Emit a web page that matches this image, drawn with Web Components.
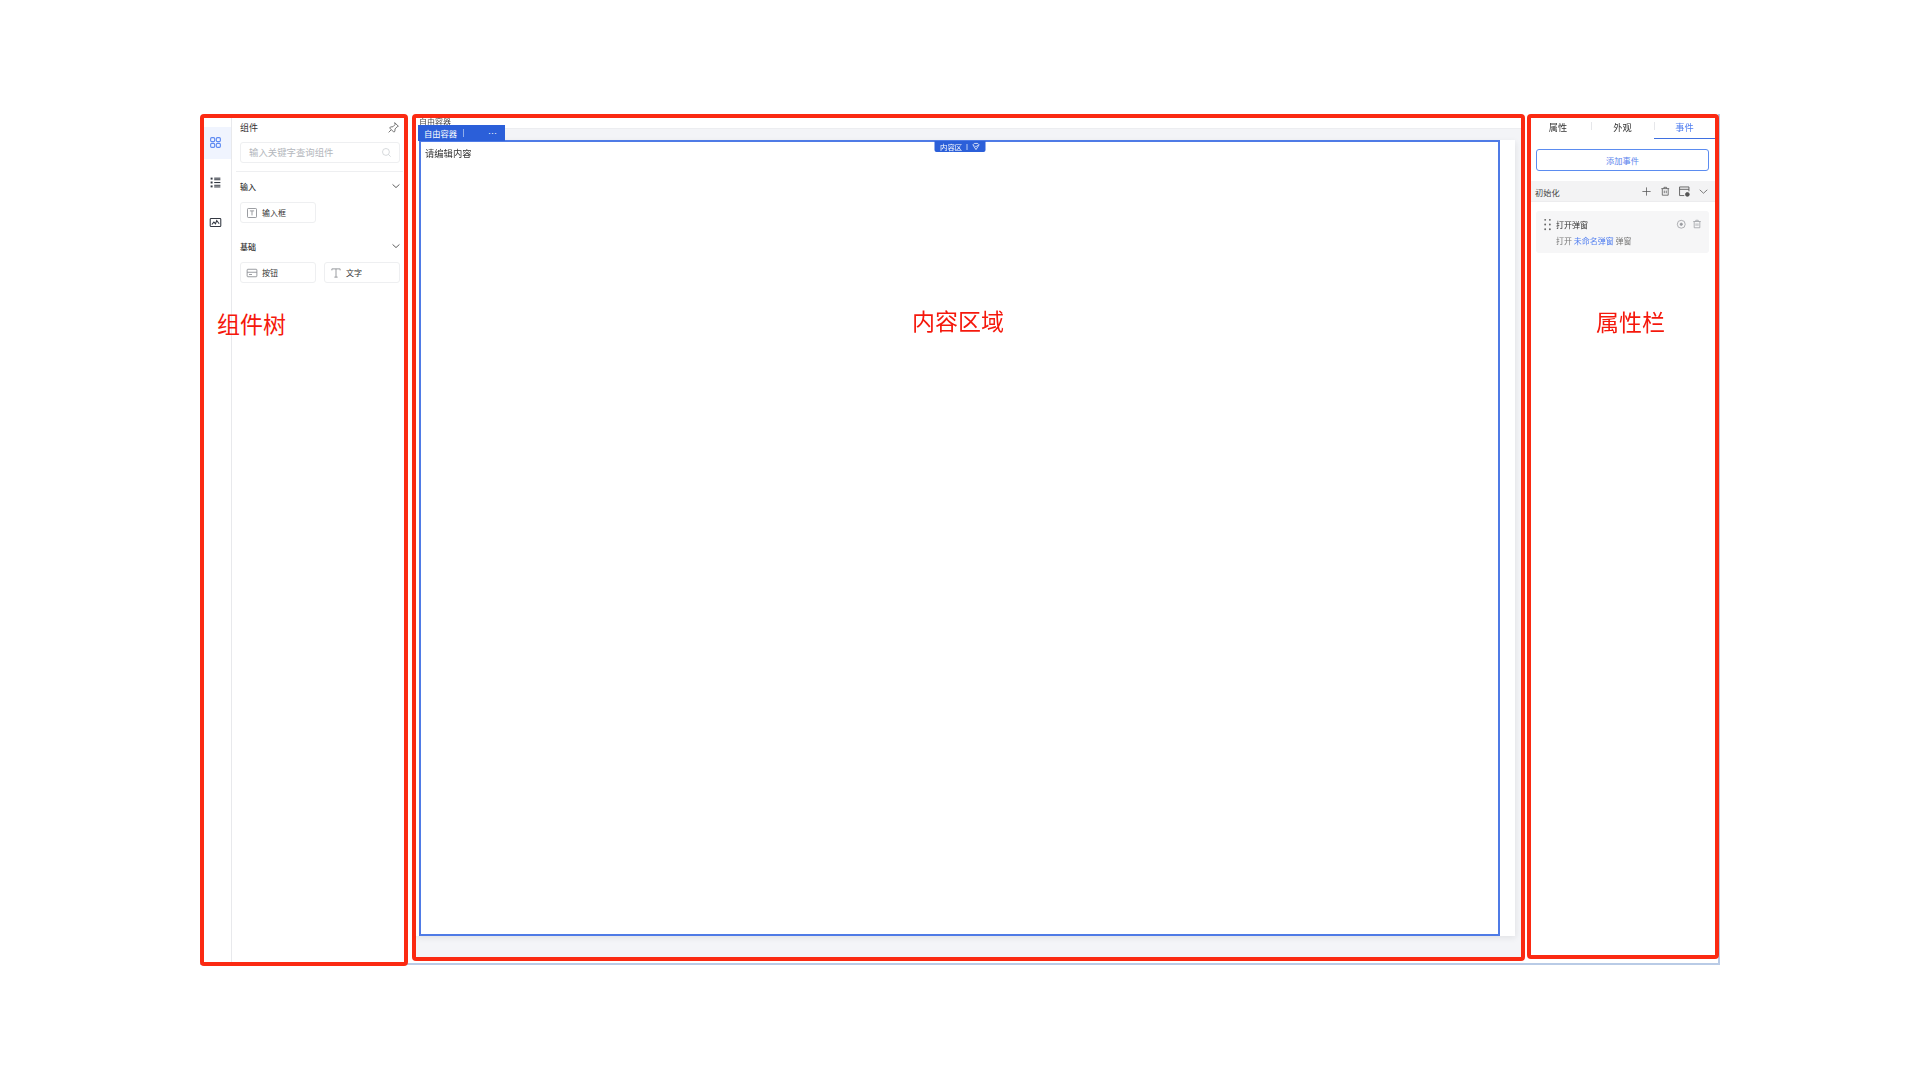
<!DOCTYPE html>
<html lang="zh">
<head>
<meta charset="utf-8">
<title>editor</title>
<style>
  html, body { margin: 0; background: #fff; }
  body { font-family: "Noto Sans CJK SC", "Liberation Sans", sans-serif; color: #333; }
</style>
</head>
<body>
<editor-stage>
  <marked-panel slot="left" style="--w:208px;--h:852px">
    <component-tree></component-tree>
  </marked-panel>
  <marked-panel slot="middle" style="--w:1113px;--h:847px;--ml:4px">
    <content-area></content-area>
  </marked-panel>
  <marked-panel slot="right" style="--w:192px;--h:845px;--ml:2px">
    <props-bar></props-bar>
  </marked-panel>
</editor-stage>

<script>
// icon paths, all on a 16x16 box
const ICONS = {
  grid: '<rect x="2" y="2" width="5" height="5" rx="1.4"/><rect x="9" y="2" width="5" height="5" rx="1.4"/><rect x="2" y="9" width="5" height="5" rx="1.4"/><rect x="9" y="9" width="5" height="5" rx="1.4"/>',
  tree: '<g fill="currentColor" stroke="none"><rect x="2" y="2" width="2.4" height="2.4"/><rect x="2" y="6.8" width="2.4" height="2.4"/><rect x="2" y="11.6" width="2.4" height="2.4"/><rect x="6.4" y="2" width="7.6" height="1.3"/><rect x="6.4" y="4" width="7.6" height="1.2"/><rect x="6.4" y="7.4" width="7.6" height="1.3"/><rect x="6.4" y="10.8" width="7.6" height="1.2"/><rect x="6.4" y="12.8" width="7.6" height="1.3"/></g>',
  image: '<rect x="1.5" y="3" width="13" height="10" rx="1"/><path d="M3.5 10.5l2.5-3 2 2 1.5-4 3 4"/>',
  pin: '<path d="M9.5 2l4.5 4.5-1.5.6-2.6 2.6-.2 3-1.3 1-5.1-5.1 1-1.3 3-.2 2.6-2.6zM5 11l-3 3"/>',
  search: '<circle cx="7.2" cy="7.2" r="5"/><path d="M11 11l3 3"/>',
  chevron: '<path d="M2.5 5.5L8 10.5l5.5-5"/>',
  textbox: '<rect x="2" y="2" width="12" height="12" rx="1"/><path d="M5.2 5.2h5.6M8 5.2v6"/>',
  button: '<rect x="1.5" y="3" width="13" height="10" rx="1"/><path d="M1.5 7h13M4 10h4"/>',
  serif: '<path d="M2.5 4.5V2.5h11v2M8 2.5v11M5.8 13.5h4.4"/>',
  plus: '<path d="M8 2v12M2 8h12"/>',
  trash: '<path d="M2 4h12M6 4V2h4v2M3.5 4v10h9V4M6.5 7v4M9.5 7v4"/>',
  save: '<path d="M14 8V2.5H2v11h6M2 5.5h12"/><circle cx="12" cy="12" r="2.4" fill="currentColor"/>',
  target: '<circle cx="8" cy="8" r="6"/><circle cx="8" cy="8" r="1.8" fill="currentColor"/>',
  drag: '<g fill="currentColor" stroke="none"><circle cx="5.5" cy="3" r="1"/><circle cx="10.5" cy="3" r="1"/><circle cx="5.5" cy="8" r="1"/><circle cx="10.5" cy="8" r="1"/><circle cx="5.5" cy="13" r="1"/><circle cx="10.5" cy="13" r="1"/></g>',
  shield: '<path d="M2.5 5L5 2.5h6L13.5 5 8 13.5zM6 6.5l2 2 3.5-3.5"/>'
};

class UiIcon extends HTMLElement {
  constructor() {
    super();
    this.attachShadow({mode: 'open'});
    const size = this.getAttribute('size') || 10;
    const sw = this.getAttribute('sw') || 1.3;
    this.shadowRoot.innerHTML = `
      <style>
        :host { display: inline-flex; flex: none; width: ${size}px; height: ${size}px; }
        svg { width: 100%; height: 100%; display: block; }
      </style>
      <svg viewBox="0 0 16 16" fill="none" stroke="currentColor" stroke-width="${sw}">${ICONS[this.getAttribute('name')] || ''}</svg>`;
  }
}
customElements.define('ui-icon', UiIcon);

// page: white sheet, the editor window sits at 200,114
const stageTpl = document.createElement('template');
stageTpl.innerHTML = `
<style>
  :host { display: block; width: 1920px; height: 1080px; padding: 114px 0 0 200px; box-sizing: border-box; position: relative; overflow: hidden; filter: blur(.35px); }
  .win { width: 1520px; height: 851px; display: flex; align-items: flex-start; box-sizing: border-box; border-right: 2px solid #b9cbe6; border-bottom: 2px solid #b9cbe6; }
  .note { position: absolute; z-index: 5; color: #f5180c; font-size: 23px; line-height: 30px; white-space: nowrap; }
</style>
<div class="win">
  <slot name="left"></slot>
  <slot name="middle"></slot>
  <slot name="right"></slot>
</div>
<span class="note" style="left:217px;top:308px">组件树</span>
<span class="note" style="left:912px;top:305px">内容区域</span>
<span class="note" style="left:1596px;top:306px">属性栏</span>`;
class EditorStage extends HTMLElement {
  constructor() {
    super();
    this.attachShadow({mode: 'open'});
    this.shadowRoot.appendChild(stageTpl.content.cloneNode(true));
  }
}
customElements.define('editor-stage', EditorStage);

// the red marker round each region
const markedTpl = document.createElement('template');
markedTpl.innerHTML = `
<style>
  :host { display: block; flex: none; box-sizing: border-box; width: var(--w); height: var(--h); margin-left: var(--ml, 0); border: 4px solid #fb2a12; border-radius: 4px; background: #fff; position: relative; z-index: 1; }
</style>
<slot></slot>`;
class MarkedPanel extends HTMLElement {
  constructor() {
    super();
    this.attachShadow({mode: 'open'});
    this.shadowRoot.appendChild(markedTpl.content.cloneNode(true));
  }
}
customElements.define('marked-panel', MarkedPanel);

// left: rail + palette
const treeTpl = document.createElement('template');
treeTpl.innerHTML = `
<style>
  :host { display: flex; height: 100%; font-size: 8px; }
  .rail { width: 27px; flex: none; border-right: 1px solid #e8e9ec; padding-top: 9px; }
  .tab { height: 32px; box-sizing: border-box; padding: 0 0 2px 4.5px; margin-bottom: 8px; display: flex; align-items: center; color: #333842; }
  .tab.on { background: #f0f4fe; color: #5f8bf2; }
  .palette { flex: 1; min-width: 0; padding: 0 4px 0 8px; }
  .head { display: flex; align-items: center; justify-content: space-between; height: 18px; font-size: 9px; color: #333; }
  .head ui-icon { color: #666; }
  .search { height: 21px; margin-top: 6px; box-sizing: border-box; border: 1px solid #eeeff1; border-radius: 3px; display: flex; align-items: center; justify-content: space-between; padding: 0 7px 1px 8px; color: #b4b7bd; font-size: 9.4px; }
  .search ui-icon { color: #c9ccd1; }
  hr { border: 0; border-top: 1px solid #eeeff1; margin: 8px -3px 0 -4px; }
  .sec { display: flex; align-items: center; justify-content: space-between; height: 14px; color: #333; font-weight: 500; }
  .sec ui-icon { color: #555; margin-right: -1px; }
  .sec.a { margin-top: 7px; }
  .sec.b { margin-top: 16px; }
  .cards { display: flex; gap: 8px; margin-top: 9px; }
</style>
<div class="rail">
  <div class="tab on"><ui-icon name="grid" size="13" sw="1.4"></ui-icon></div>
  <div class="tab"><ui-icon name="tree" size="13"></ui-icon></div>
  <div class="tab"><ui-icon name="image" size="13"></ui-icon></div>
</div>
<div class="palette">
  <div class="head"><span>组件</span><ui-icon name="pin" size="13" sw="1.1"></ui-icon></div>
  <div class="search"><span>输入关键字查询组件</span><ui-icon name="search" size="11" sw="1.1"></ui-icon></div>
  <hr>
  <div class="sec a"><span>输入</span><ui-icon name="chevron" size="10" sw="1.5"></ui-icon></div>
  <div class="cards"><comp-card icon="textbox">输入框</comp-card></div>
  <div class="sec b"><span>基础</span><ui-icon name="chevron" size="10" sw="1.5"></ui-icon></div>
  <div class="cards"><comp-card icon="button">按钮</comp-card><comp-card icon="serif">文字</comp-card></div>
</div>`;
class ComponentTree extends HTMLElement {
  constructor() {
    super();
    this.attachShadow({mode: 'open'});
    this.shadowRoot.appendChild(treeTpl.content.cloneNode(true));
  }
}
customElements.define('component-tree', ComponentTree);

class CompCard extends HTMLElement {
  constructor() {
    super();
    this.attachShadow({mode: 'open'});
    this.shadowRoot.innerHTML = `
      <style>
        :host { display: flex; align-items: center; gap: 4px; width: 76px; height: 21px; box-sizing: border-box; border: 1px solid #eeeff1; border-radius: 3px; padding-left: 5px; font-size: 8px; color: #333; }
        ui-icon { color: #85888e; }
      </style>
      <ui-icon name="${this.getAttribute('icon')}" size="12" sw="1.1"></ui-icon><slot></slot>`;
  }
}
customElements.define('comp-card', CompCard);

// middle: the canvas
const contentTpl = document.createElement('template');
contentTpl.innerHTML = `
<style>
  :host { display: flex; flex-direction: column; height: 100%; font-size: 8.25px; background: #f4f5f8; }
  .crumb { height: 7px; flex: none; line-height: 7px; font-size: 8px; padding-left: 3px; color: #444; background: #fff; }
  .bar { display: flex; height: 15px; flex: none; background: #fff; }
  .tab { width: 87px; height: 16px; margin-left: 2px; box-sizing: border-box; background: #2b5fd9; color: #fff; display: flex; align-items: center; padding-left: 6px; position: relative; z-index: 2; white-space: nowrap; }
  .tab i { width: 1px; height: 8px; background: #8fadea; margin-left: 6px; flex: none; }
  .tab b { font: 400 9px/8px "Liberation Sans", sans-serif; margin-left: 24px; }
  .strip { flex: 1; margin-top: 3px; background: #f3f4f7; border-top: 1px solid #ecedf0; }
  .sheet { width: 1099px; height: 796px; flex: none; background: #fff; padding-left: 3px; box-sizing: border-box; box-shadow: 1px 2px 6px rgba(0,0,0,.08); }
  .frame { position: relative; width: 1081px; height: 796px; box-sizing: border-box; border: 2px solid #4f7be6; padding: 4.5px 4px; font-size: 9.3px; line-height: 12px; color: #333; }
  .badge { position: absolute; left: 50%; top: -1px; transform: translateX(-50%); width: 51px; height: 11px; box-sizing: border-box; background: #2b5fd9; border-radius: 0 0 2px 2px; color: #fff; font-size: 7.4px; line-height: 11px; display: flex; align-items: center; padding-left: 6px; white-space: nowrap; }
  .badge i { width: 1px; height: 6px; background: #b9cdf5; margin: 0 4px 0 4px; flex: none; }
</style>
<div class="crumb">自由容器</div>
<div class="bar">
  <div class="tab">自由容器<i></i><b>···</b></div>
  <div class="strip"></div>
</div>
<div class="sheet">
  <div class="frame">
    请编辑内容
    <div class="badge">内容区<i></i><ui-icon name="shield" size="9" sw="1.4"></ui-icon></div>
  </div>
</div>`;
class ContentArea extends HTMLElement {
  constructor() {
    super();
    this.attachShadow({mode: 'open'});
    this.shadowRoot.appendChild(contentTpl.content.cloneNode(true));
  }
}
customElements.define('content-area', ContentArea);

// right: property tabs + event list
const propsTpl = document.createElement('template');
propsTpl.innerHTML = `
<style>
  :host { display: block; height: 100%; font-size: 8.2px; color: #333; }
  .tabs { display: grid; grid-template-columns: 60px 63px 61px; height: 22px; font-size: 9.2px; }
  .tabs div { display: flex; align-items: center; justify-content: center; height: 16px; box-sizing: border-box; padding-top: 1px; position: relative; }
  .tabs div:first-child { padding-right: 6px; }
  .tabs div + div::before { content: ""; position: absolute; left: 0; top: 4px; height: 8px; width: 1px; background: #e6e7ea; }
  .tabs .on { color: #4f7df0; height: 21px; padding-bottom: 4px; border-bottom: 1px solid #3f70e0; }
  .add { margin: 9px 6px 0 5px; height: 22px; box-sizing: border-box; border: 1px solid #5b8cf0; border-radius: 3px; color: #5c85ee; display: flex; align-items: center; justify-content: center; }
  .group { margin-top: 10px; height: 21px; background: #f3f3f4; display: flex; align-items: center; padding: 1px 2.5px 0 4px; color: #444; border-bottom: 1px solid #ececee; box-sizing: border-box; }
  .group span { flex: 1; }
  .group div { width: 19px; display: flex; justify-content: center; color: #555; }
  event-card { margin: 9px 6px 0 5px; }
</style>
<div class="tabs">
  <div>属性</div>
  <div>外观</div>
  <div class="on">事件</div>
</div>
<div class="add">添加事件</div>
<div class="group">
  <span>初始化</span>
  <div><ui-icon name="plus" size="11" sw="1.1"></ui-icon></div>
  <div><ui-icon name="trash" size="10.5" sw="1.2"></ui-icon></div>
  <div><ui-icon name="save" size="12.5" sw="1.1"></ui-icon></div>
  <div><ui-icon name="chevron" size="11" sw="1.1"></ui-icon></div>
</div>
<event-card title-text="打开弹窗">打开 <a>未命名弹窗</a> 弹窗</event-card>`;
class PropsBar extends HTMLElement {
  constructor() {
    super();
    this.attachShadow({mode: 'open'});
    this.shadowRoot.appendChild(propsTpl.content.cloneNode(true));
    this.shadowRoot.querySelector('a').style.color = '#4f7df0';
  }
}
customElements.define('props-bar', PropsBar);

class EventCard extends HTMLElement {
  constructor() {
    super();
    this.attachShadow({mode: 'open'});
    this.shadowRoot.innerHTML = `
      <style>
        :host { display: block; height: 42px; background: #f6f6f7; border-radius: 3px; box-sizing: border-box; padding: 6px 7px 0 3.5px; font-size: 8px; }
        .t { display: flex; align-items: center; height: 14px; color: #333; }
        .t span { flex: 1; margin-left: 1.5px; }
        .t .drag { color: #666; }
        .t .a { color: #9a9ca1; margin-left: 5.5px; }
        .d { margin: 3px 0 0 16.5px; line-height: 14px; color: #777; }
      </style>
      <div class="t">
        <ui-icon class="drag" name="drag" size="15"></ui-icon>
        <span>${this.getAttribute('title-text')}</span>
        <ui-icon class="a" name="target" size="10.5" sw="1.2"></ui-icon>
        <ui-icon class="a" name="trash" size="10" sw="1.2"></ui-icon>
      </div>
      <div class="d"><slot></slot></div>`;
  }
}
customElements.define('event-card', EventCard);
</script>
</body>
</html>
